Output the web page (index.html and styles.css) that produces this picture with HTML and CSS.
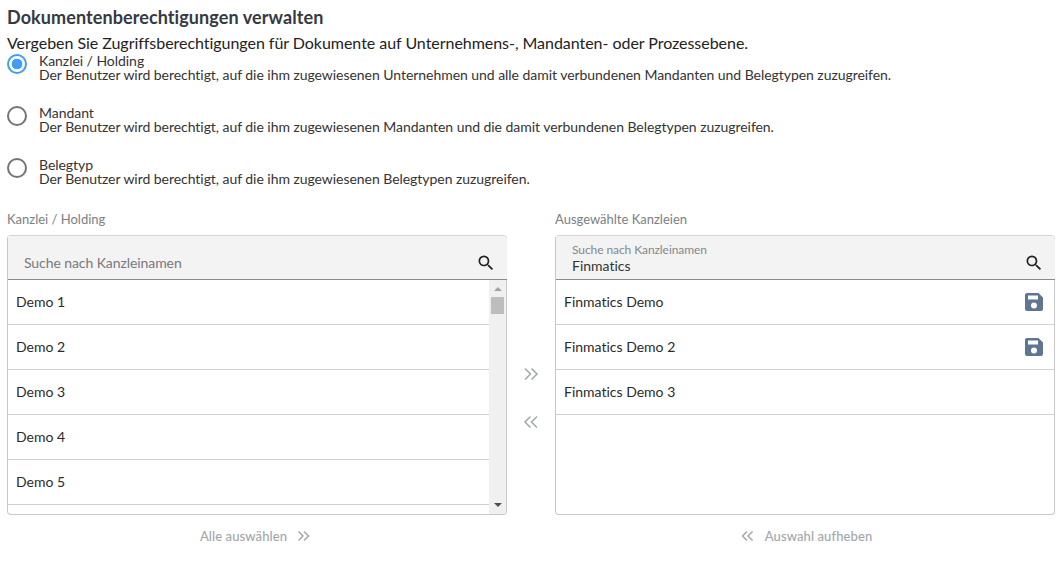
FILE: index.html
```html
<!DOCTYPE html>
<html lang="de">
<head>
<meta charset="utf-8">
<title>Dokumentenberechtigungen verwalten</title>
<link rel="stylesheet" href="styles.css">
</head>
<body>
<main class="page">
  <h1 class="title">Dokumentenberechtigungen verwalten</h1>
  <p class="intro">Vergeben Sie Zugriffsberechtigungen für Dokumente auf Unternehmens-, Mandanten- oder Prozessebene.</p>
  <div class="options">
    <div class="option">
      <span class="radio radio-on"></span>
      <div class="option-text"><div>Kanzlei / Holding</div><div>Der Benutzer wird berechtigt, auf die ihm zugewiesenen Unternehmen und alle damit verbundenen Mandanten und Belegtypen zuzugreifen.</div></div>
    </div>
    <div class="option">
      <span class="radio"></span>
      <div class="option-text"><div>Mandant</div><div>Der Benutzer wird berechtigt, auf die ihm zugewiesenen Mandanten und die damit verbundenen Belegtypen zuzugreifen.</div></div>
    </div>
    <div class="option">
      <span class="radio"></span>
      <div class="option-text"><div>Belegtyp</div><div>Der Benutzer wird berechtigt, auf die ihm zugewiesenen Belegtypen zuzugreifen.</div></div>
    </div>
  </div>
  <div class="transfer">
    <section class="col">
      <div class="col-label">Kanzlei / Holding</div>
      <div class="panel">
        <div class="search">
          <span class="placeholder">Suche nach Kanzleinamen</span>
          <svg class="search-icon" viewBox="0 0 24 24" width="20" height="20"><path fill="#212121" d="M15.5 14h-.79l-.28-.27A6.47 6.47 0 0 0 16 9.5 6.5 6.5 0 1 0 9.5 16c1.61 0 3.09-.59 4.23-1.57l.27.28v.79l5 4.99L20.49 19l-4.99-5zm-6 0C7.01 14 5 11.99 5 9.5S7.01 5 9.5 5 14 7.01 14 9.5 11.99 14 9.5 14z"/></svg>
        </div>
        <div class="list-wrap">
          <ul class="list">
            <li class="row">Demo 1</li>
            <li class="row">Demo 2</li>
            <li class="row">Demo 3</li>
            <li class="row">Demo 4</li>
            <li class="row">Demo 5</li>
          </ul>
          <div class="scrollbar">
            <span class="arrow-up"></span>
            <span class="thumb"></span>
            <span class="arrow-down"></span>
          </div>
        </div>
      </div>
      <div class="action action-add">Alle auswählen
        <svg class="chev" viewBox="1.500 0 12 12" width="12" height="12"><path d="M2 1.5 6.500 6 2 10.500M7.500 1.500 12 6 7.500 10.500"/></svg>
      </div>
    </section>
    <div class="mid">
      <svg class="chev" viewBox="0 0 16 14" width="16" height="14"><path d="M2 1.5 7.5 7 2 12.5M8.500 1.500 14 7 8.500 12.500"/></svg>
      <svg class="chev" viewBox="0 0 16 14" width="16" height="14"><path d="M14 1.500 8.500 7 14 12.500M7.500 1.500 2 7 7.500 12.500"/></svg>
    </div>
    <section class="col">
      <div class="col-label">Ausgewählte Kanzleien</div>
      <div class="panel">
        <div class="search">
          <div class="field">
            <span class="float-label">Suche nach Kanzleinamen</span>
            <span class="value">Finmatics</span>
          </div>
          <svg class="search-icon" viewBox="0 0 24 24" width="20" height="20"><path fill="#212121" d="M15.5 14h-.79l-.28-.27A6.47 6.47 0 0 0 16 9.5 6.5 6.5 0 1 0 9.5 16c1.61 0 3.09-.59 4.23-1.57l.27.28v.79l5 4.99L20.49 19l-4.99-5zm-6 0C7.01 14 5 11.99 5 9.5S7.01 5 9.5 5 14 7.01 14 9.5 11.99 14 9.5 14z"/></svg>
        </div>
        <ul class="list">
          <li class="row">Finmatics Demo
            <svg class="save" viewBox="0 0 18 18" width="18" height="18"><path fill="#5f7590" d="M2 0h11.500L18 4.500V16a2 2 0 0 1-2 2H2a2 2 0 0 1-2-2V2a2 2 0 0 1 2-2zM3 2.500V6.500h10v-4zM9 9.500a3 3 0 1 0 0 6 3 3 0 0 0 0-6z" fill-rule="evenodd"/></svg>
          </li>
          <li class="row">Finmatics Demo 2
            <svg class="save" viewBox="0 0 18 18" width="18" height="18"><path fill="#5f7590" d="M2 0h11.500L18 4.500V16a2 2 0 0 1-2 2H2a2 2 0 0 1-2-2V2a2 2 0 0 1 2-2zM3 2.500V6.500h10v-4zM9 9.500a3 3 0 1 0 0 6 3 3 0 0 0 0-6z" fill-rule="evenodd"/></svg>
          </li>
          <li class="row">Finmatics Demo 3</li>
        </ul>
      </div>
      <div class="action action-remove">
        <svg class="chev" viewBox="1.500 0 12 12" width="12" height="12"><path d="M12 1.500 7.500 6 12 10.500M6.500 1.500 2 6 6.500 10.500"/></svg>
        Auswahl aufheben
      </div>
    </section>
  </div>
</main>
</body>
</html>
```
FILE: styles.css
```css
* { box-sizing: border-box; }
html, body { margin: 0; padding: 0; background: #fff; }
body {
  font-family: Lato, "Open Sans", sans-serif;
  font-variant-ligatures: none;
  color: #2b2b2b;
  overflow: hidden;
}
.page { padding: 7px 8px 0 7px; }
.title {
  margin: 0;
  font-size: 18px;
  line-height: 20px;
  font-weight: 700;
  letter-spacing: 0.09px;
  color: #36393f;
}
.intro {
  margin: 6px 0 0;
  font-size: 16px;
  line-height: 20px;
  letter-spacing: -0.04px;
  color: #222;
}
.options { margin-top: 0; }
.option {
  display: flex;
  height: 52px;
  padding-top: 1px;
}
.radio {
  flex: none;
  width: 20px;
  height: 20px;
  border: 2px solid #757575;
  border-radius: 50%;
  background: #fff;
}
.radio-on {
  border-color: #3f9bff;
  background: radial-gradient(circle, #3f9bff 0 5px, #fff 5.6px);
}
.option-text {
  margin-left: 12px;
  font-size: 14px;
  line-height: 14px;
  letter-spacing: -0.045px;
  color: #333;
}
.transfer {
  display: grid;
  grid-template-columns: 500px 48px 500px;
  margin-top: 2px;
}
.col-label {
  font-size: 13px;
  line-height: 16px;
  height: 24px;
  color: #7a7f85;
}
.panel {
  height: 280px;
  border: 1px solid #c8c8c8;
  border-top-color: #d4d4d4;
  border-radius: 4px;
  display: flex;
  flex-direction: column;
}
.search {
  flex: none;
  height: 44px;
  margin-right: -1px;
  border-top-right-radius: 4px;
  background: #f3f3f3;
  border-bottom: 1px solid #8a8a8a;
  display: flex;
  align-items: flex-end;
  justify-content: space-between;
  padding: 0 11px 6px 16px;
}
.placeholder {
  font-size: 14px;
  line-height: 20px;
  letter-spacing: -0.08px;
  color: #77797c;
}
.search-icon { flex: none; }
.field { display: flex; flex-direction: column; margin-bottom: -1px; }
.float-label {
  font-size: 12px;
  line-height: 13px;
  margin-bottom: 1px;
  letter-spacing: -0.08px;
  color: #85878a;
}
.value {
  font-size: 14px;
  line-height: 17px;
  color: #333;
}
.list-wrap { flex: 1; display: flex; min-height: 0; overflow: hidden; border-bottom-right-radius: 3px; }
.list {
  flex: 1;
  list-style: none;
  margin: 0;
  padding: 0;
  min-width: 0;
}
.row {
  height: 45px;
  border-bottom: 1px solid #d0d0d0;
  padding: 0 11px 1px 8px;
  display: flex;
  align-items: center;
  justify-content: space-between;
  font-size: 14px;
  color: #2b2b2b;
}
.scrollbar {
  flex: none;
  width: 17px;
  background: #f0f0f0;
  display: flex;
  flex-direction: column;
  align-items: center;
}
.arrow-up {
  margin-top: 7px;
  border: 4px solid transparent;
  border-top: 0;
  border-bottom-color: #a3a3a3;
}
.thumb {
  width: 13px;
  height: 17px;
  margin-top: 6px;
  background: #bdbdbd;
}
.arrow-down {
  margin-top: auto;
  margin-bottom: 7px;
  border: 4px solid transparent;
  border-bottom: 0;
  border-top-color: #505050;
}
.mid {
  display: flex;
  flex-direction: column;
  align-items: center;
  gap: 34px;
  padding-top: 156px;
}
.chev path { fill: none; stroke: #a0a6ad; stroke-width: 1.5; }
.action {
  display: flex;
  align-items: center;
  justify-content: center;
  gap: 11px;
  height: 42px;
  font-size: 13px;
  letter-spacing: 0.1px;
  font-weight: 500;
  color: #a2a6ab;
}
.action-add { padding-right: 4px; }
.action-remove { padding-left: 4px; }
```
